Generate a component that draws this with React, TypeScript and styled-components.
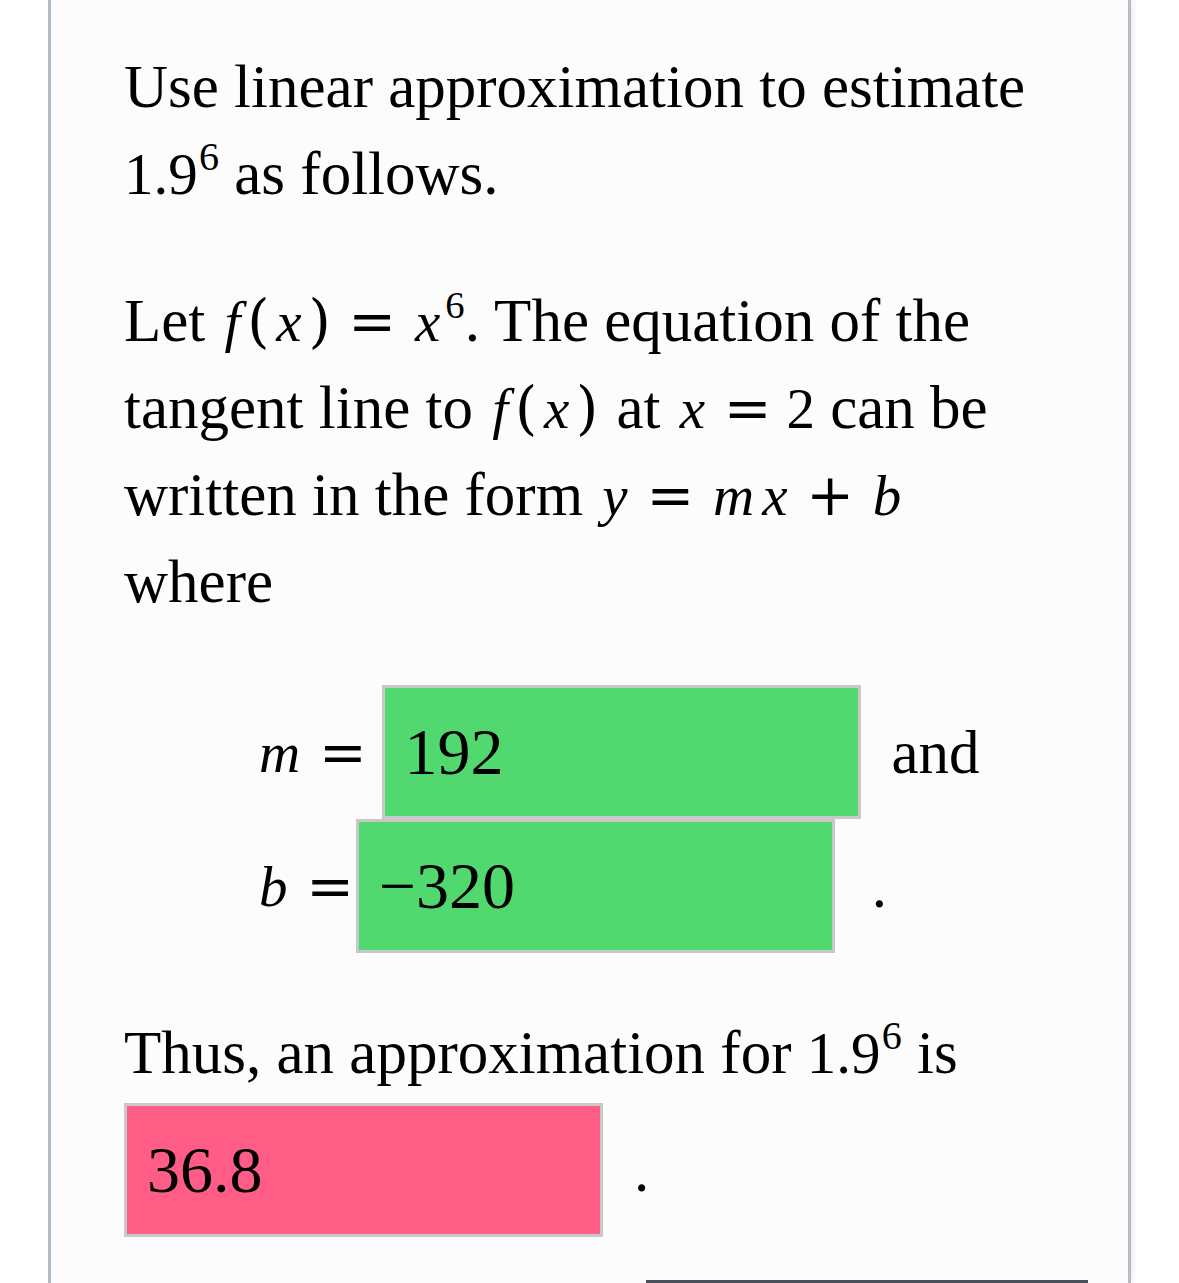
import React from "react";
import styled, { createGlobalStyle } from "styled-components";

const Global = createGlobalStyle`
  html, body {
    margin: 0;
    padding: 0;
    background: #ffffff;
    overflow: hidden;
  }
  body {
    font-family: "Liberation Serif", "Times New Roman", serif;
    color: #000000;
  }
`;

const Page = styled.div`
  padding-left: 48px;
  height: 1283px;
  box-sizing: border-box;
`;

const Card = styled.main`
  width: 1083px;
  height: 1283px;
  box-sizing: border-box;
  overflow: hidden;
  background: #fcfcfc;
  border-left: 3px solid #b4bcc4;
  border-right: 3px solid #b4bcc4;
  box-shadow: 3px 0 5px rgba(0, 0, 0, 0.06);
  padding: 43px 80px 0 73px;
  font-size: 61px;
  line-height: 87px;
`;

const Para = styled.p`
  margin: 0 0 60px;
`;

const Math = styled.span<{ $size?: number }>`
  font-family: "Liberation Serif", "Times New Roman", serif;
  font-size: ${(p) => p.$size ?? 57}px;
  line-height: 1;
  white-space: nowrap;
`;

const Var = styled.i`
  font-style: italic;
  padding: 0 0.07em;
`;

const Op = styled.span`
  font-family: "DejaVu Serif", serif;
  margin: 0 0.26em;
`;

const Paren = styled.span`
  font-family: "DejaVu Serif", serif;
  padding: 0 0.05em;
`;

const Sup = styled.sup`
  font-size: 0.68em;
  line-height: 0;
  vertical-align: 0.6em;
  margin-left: 0.03em;
`;

const Block = styled.div`
  display: flex;
  flex-direction: column;
  padding-left: 131px;
  margin: 3px 0 56px;
`;

const Row = styled.div`
  display: flex;
  align-items: center;
`;

const Label = styled.span<{ $gap: number }>`
  font-family: "Liberation Serif", "Times New Roman", serif;
  font-size: 57px;
  line-height: 1;
  white-space: nowrap;
  margin-right: ${(p) => p.$gap}px;
`;

const Answer = styled.input<{ $tone: "ok" | "bad" }>`
  position: relative;
  width: 479px;
  height: 134px;
  box-sizing: border-box;
  border: 3px solid #c8c8c8;
  border-radius: 0;
  margin: 0;
  padding: 0 20px;
  background: ${(p) => (p.$tone === "ok" ? "#51d96f" : "#ff5c86")};
  font-family: "Liberation Serif", "Times New Roman", serif;
  font-size: 66px;
  color: #000000;
  outline: none;
`;

const After = styled.span<{ $gap: number }>`
  margin-left: ${(p) => p.$gap}px;
  line-height: 87px;
`;

const Lead = styled.div`
  line-height: 87px;
`;

const AnswerRow = styled.div`
  display: flex;
  align-items: center;
  margin-top: 7px;
`;

const Footer = styled.div`
  display: flex;
  justify-content: flex-end;
  margin-right: -40px;
  margin-top: 43px;
`;

const SubmitButton = styled.button`
  width: 442px;
  height: 90px;
  border: 3px solid #4a5058;
  border-radius: 0;
  background: #fcfcfc;
  padding: 0;
`;

const F = () => (
  <>
    <Var>f</Var>
    <Paren>(</Paren>
    <Var>x</Var>
    <Paren>)</Paren>
  </>
);

export default function App() {
  return (
    <>
      <Global />
      <Page>
        <Card>
          <Para>
            Use linear approximation to estimate{" "}
            <Math $size={59}>
              1.9<Sup>6</Sup>
            </Math>{" "}
            as follows.
          </Para>
          <Para>
            Let{" "}
            <Math>
              <F />
              <Op>=</Op>
              <Var>x</Var>
              <Sup>6</Sup>
            </Math>
            . The equation of the tangent line to{" "}
            <Math>
              <F />
            </Math>{" "}
            at{" "}
            <Math>
              <Var>x</Var>
              <Op>=</Op>2
            </Math>{" "}
            can be written in the form{" "}
            <Math>
              <Var>y</Var>
              <Op>=</Op>
              <Var>m</Var>
              <Var>x</Var>
              <Op>+</Op>
              <Var>b</Var>
            </Math>{" "}
            where
          </Para>
          <Block>
            <Row>
              <Label $gap={0}>
                <Var>m</Var>
                <Op>=</Op>
              </Label>
              <Answer $tone="ok" readOnly value="192" />
              <After $gap={31}>and</After>
            </Row>
            <Row>
              <Label $gap={-13}>
                <Var>b</Var>
                <Op>=</Op>
              </Label>
              <Answer $tone="ok" readOnly value="−320" />
              <After $gap={37}>.</After>
            </Row>
          </Block>
          <div>
            <Lead>
              Thus, an approximation for{" "}
              <Math $size={59}>
                1.9<Sup>6</Sup>
              </Math>{" "}
              is
            </Lead>
            <AnswerRow>
              <Answer $tone="bad" readOnly value="36.8" />
              <After $gap={31}>.</After>
            </AnswerRow>
          </div>
          <Footer>
            <SubmitButton type="button" aria-label="Submit" />
          </Footer>
        </Card>
      </Page>
    </>
  );
}
